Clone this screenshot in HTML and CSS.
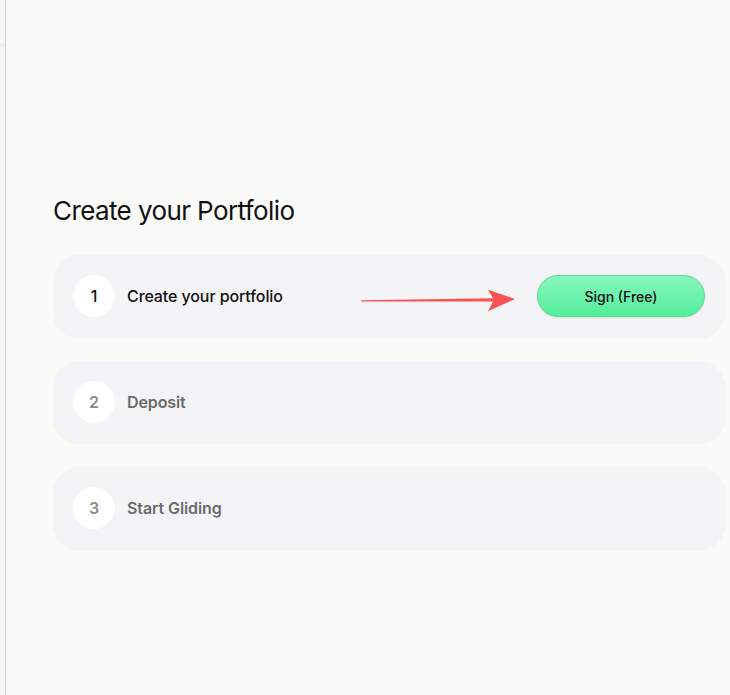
FILE: index.html
```html
<!DOCTYPE html>
<html>
<head>
<meta charset="utf-8">
<link rel="stylesheet" href="styles.css">
</head>
<body>
<div class="page">
  <div class="rail"><div class="rail-mark"></div></div>
  <main class="main">
    <h1 class="title">Create your Portfolio</h1>
    <div class="steps">
      <div class="step active">
        <div class="num">1</div>
        <div class="label">Create your portfolio</div>
        <svg class="arrow" width="156" height="26" viewBox="0 0 156 26">
          <path d="M0 14.2 L132 12.2 L127 3.8 L154 13 L127 25.2 L132 15.4 L0 15.6 Z" fill="#f85252"/>
        </svg>
        <button class="btn">Sign (Free)</button>
      </div>
      <div class="step">
        <div class="num">2</div>
        <div class="label">Deposit</div>
      </div>
      <div class="step">
        <div class="num">3</div>
        <div class="label">Start Gliding</div>
      </div>
    </div>
  </main>
</div>
</body>
</html>
```
FILE: styles.css
```css
html, body {
  margin: 0;
  padding: 0;
  background: #fafaf9;
  font-family: Inter, "Noto Sans", sans-serif;
}
.page {
  display: flex;
  min-height: 695px;
}
.rail {
  width: 5px;
  border-right: 1px solid #cfcfcf;
  background: #f7f7f6;
  flex-shrink: 0;
}
.rail-mark {
  margin-top: 43px;
  height: 4px;
  background: #efefee;
}
.main {
  flex: 1;
  padding: 195px 5px 0 47px;
}
.title {
  margin: 0;
  font-size: 26px;
  line-height: 32px;
  font-weight: 400;
  color: #111;
  letter-spacing: -0.6px;
}
.steps {
  margin-top: 28px;
  display: flex;
  flex-direction: column;
  gap: 24px;
}
.step {
  height: 82px;
  box-sizing: border-box;
  background: #f4f4f6;
  border-radius: 26px;
  box-shadow: 0 1px 2px rgba(0,0,0,0.04);
  display: flex;
  align-items: center;
  padding: 0 20px;
}
.num {
  width: 42px;
  height: 42px;
  border-radius: 50%;
  background: #fff;
  display: flex;
  align-items: center;
  justify-content: center;
  font-size: 16px;
  font-weight: 600;
  color: #8a8a8a;
  flex-shrink: 0;
}
.label {
  margin-left: 12px;
  font-size: 16px;
  font-weight: 600;
  color: #6b6b6b;
  letter-spacing: -0.1px;
}
.active .num {
  color: #111;
  font-weight: 500;
}
.active .label {
  color: #111;
  font-weight: 500;
}
.arrow {
  margin-left: 78px;
  margin-top: 6px;
  display: block;
}
.btn {
  margin-left: auto;
  width: 168px;
  height: 42px;
  border-radius: 21px;
  border: 1px solid #5fd896;
  background: linear-gradient(#88f6bd, #52ee9a);
  font-family: Inter, "Noto Sans", sans-serif;
  font-size: 14px;
  font-weight: 500;
  color: #111;
  box-shadow: 0 1px 2px rgba(0,0,0,0.08);
  cursor: pointer;
}
```
